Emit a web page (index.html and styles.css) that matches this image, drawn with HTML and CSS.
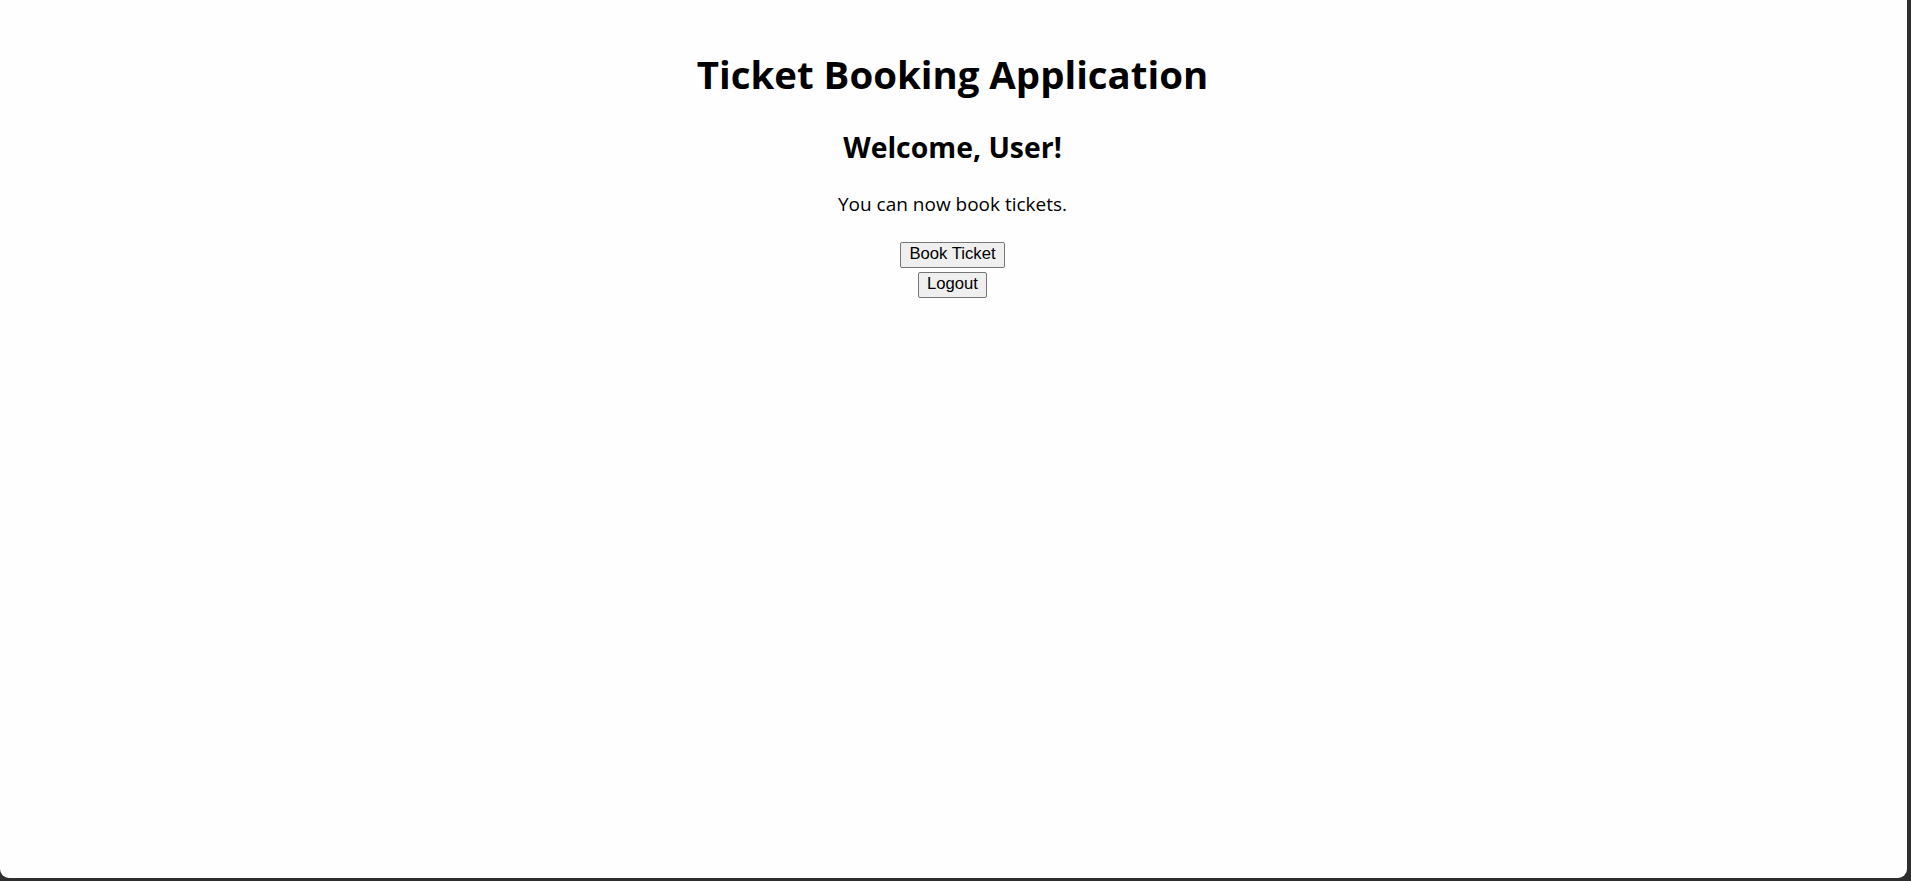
FILE: index.html
```html
<!DOCTYPE html>
<html lang="en">
<head>
<meta charset="utf-8">
<title>Ticket Booking Application</title>
<link rel="stylesheet" href="styles.css">
</head>
<body>
<div class="window">
  <div class="app">
    <h1 class="title">Ticket Booking Application</h1>
    <h2 class="welcome">Welcome, User!</h2>
    <p class="note">You can now book tickets.</p>
    <div class="actions">
      <button class="btn" type="button">Book Ticket</button>
      <button class="btn" type="button">Logout</button>
    </div>
  </div>
</div>
</body>
</html>
```
FILE: styles.css
```css
html, body {
  margin: 0;
  padding: 0;
  height: 100%;
}
body {
  background: #2e2e2e;
  overflow: hidden;
}
.window {
  width: calc(100% - 4px);
  height: calc(100% - 3px);
  background: #fefefe;
  border-radius: 0 0 9px 9px;
  color: #000;
  font-family: "Open Sans", "Noto Sans", sans-serif;
}
.app {
  text-align: center;
  padding: 48px 2px 0 0;
}
.title {
  margin: 0;
  font-size: 38.4px;
  line-height: 53px;
  font-weight: 700;
}
.welcome {
  margin: 26px 0 0;
  font-size: 28.4px;
  line-height: 40px;
  font-weight: 700;
}
.note {
  margin: 24px 0 0;
  font-size: 19px;
  line-height: 27px;
}
.actions {
  margin-top: 24px;
  display: flex;
  flex-direction: column;
  align-items: center;
  gap: 4px;
}
.btn {
  font-family: "Liberation Sans", Arial, sans-serif;
  font-size: 16.67px;
  line-height: 20px;
  padding: 1px 8.5px 3px;
  border: 1px solid #767676;
  border-radius: 2px;
  background: #efefef;
  color: #000;
}
```
